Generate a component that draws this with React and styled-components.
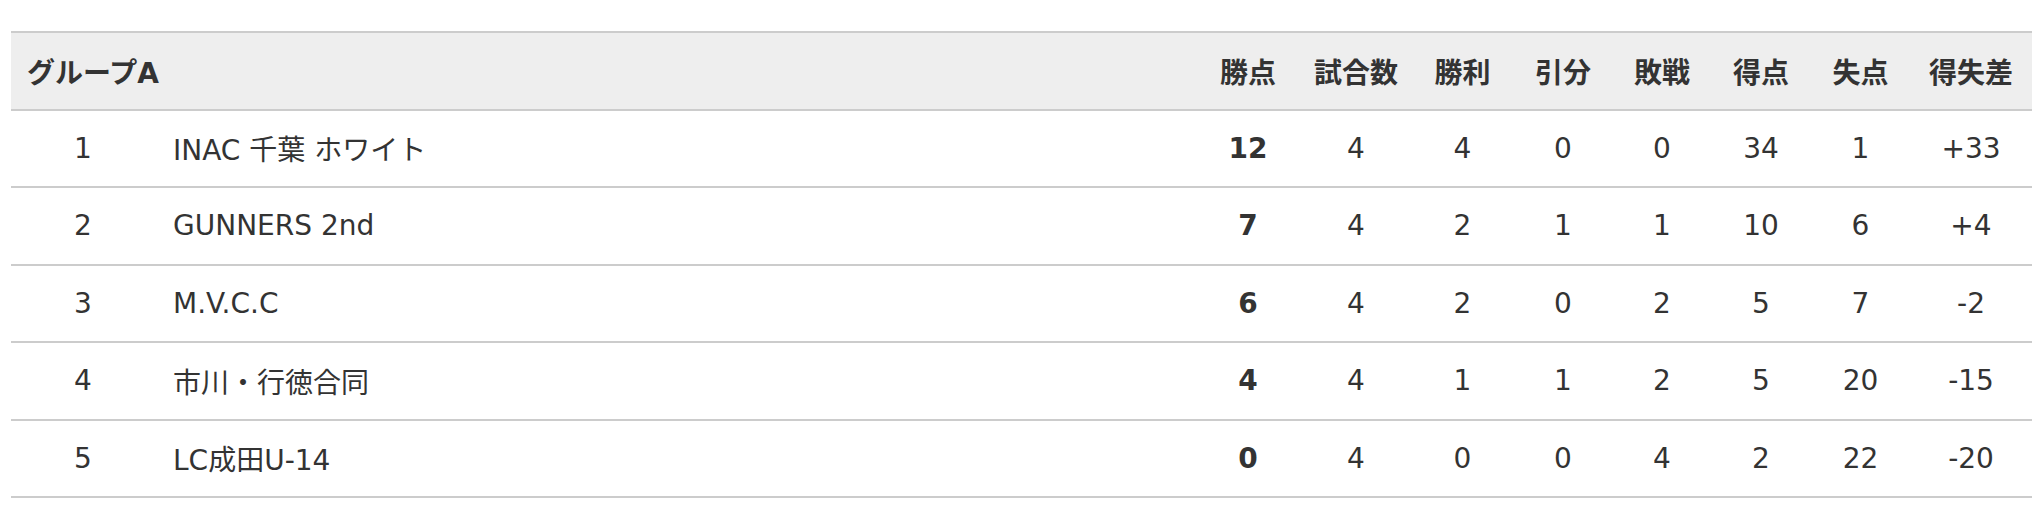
import React from 'react';
import styled, { createGlobalStyle } from 'styled-components';

const GlobalStyle = createGlobalStyle`
  body {
    margin: 0;
    background: #fff;
    font-family: "DejaVu Sans", "Noto Sans CJK JP", sans-serif;
    color: #333;
  }
`;

const Wrapper = styled.div`
  padding: 31px 2px 0 11px;
`;

const Table = styled.div`
  display: flex;
  flex-direction: column;
  border-top: 2px solid #ccc;
`;

const Row = styled.div`
  display: grid;
  grid-template-columns: 144px 1fr 104px 112px 101px 100px 98px 100px 99px 122px;
  align-items: center;
  height: 75.5px;
  border-bottom: 2px solid #ccc;
  background: ${props => (props.head ? '#eee' : '#fff')};
  font-size: 28px;
  font-weight: ${props => (props.head ? 700 : 400)};
`;

const GroupTitle = styled.div`
  grid-column: 1 / 3;
  padding-left: 16px;
`;

const Cell = styled.div`
  text-align: center;
  white-space: nowrap;
  font-weight: ${props => (props.bold ? 700 : 'inherit')};
`;

const Name = styled.div`
  padding-left: 18px;
  white-space: nowrap;
`;

const columns = ['勝点', '試合数', '勝利', '引分', '敗戦', '得点', '失点', '得失差'];

const teams = [
  { rank: 1, name: 'INAC 千葉 ホワイト', stats: [12, 4, 4, 0, 0, 34, 1, '+33'] },
  { rank: 2, name: 'GUNNERS 2nd', stats: [7, 4, 2, 1, 1, 10, 6, '+4'] },
  { rank: 3, name: 'M.V.C.C', stats: [6, 4, 2, 0, 2, 5, 7, '-2'] },
  { rank: 4, name: '市川・行徳合同', stats: [4, 4, 1, 1, 2, 5, 20, '-15'] },
  { rank: 5, name: 'LC成田U-14', stats: [0, 4, 0, 0, 4, 2, 22, '-20'] },
];

const App = () => {
  return (
    <Wrapper>
      <GlobalStyle />
      <Table>
        <Row head>
          <GroupTitle>グループA</GroupTitle>
          {columns.map(c => (
            <Cell key={c}>{c}</Cell>
          ))}
        </Row>
        {teams.map(t => (
          <Row key={t.rank}>
            <Cell>{t.rank}</Cell>
            <Name>{t.name}</Name>
            {t.stats.map((s, i) => (
              <Cell key={i} bold={i === 0}>
                {s}
              </Cell>
            ))}
          </Row>
        ))}
      </Table>
    </Wrapper>
  );
};

export default App;
